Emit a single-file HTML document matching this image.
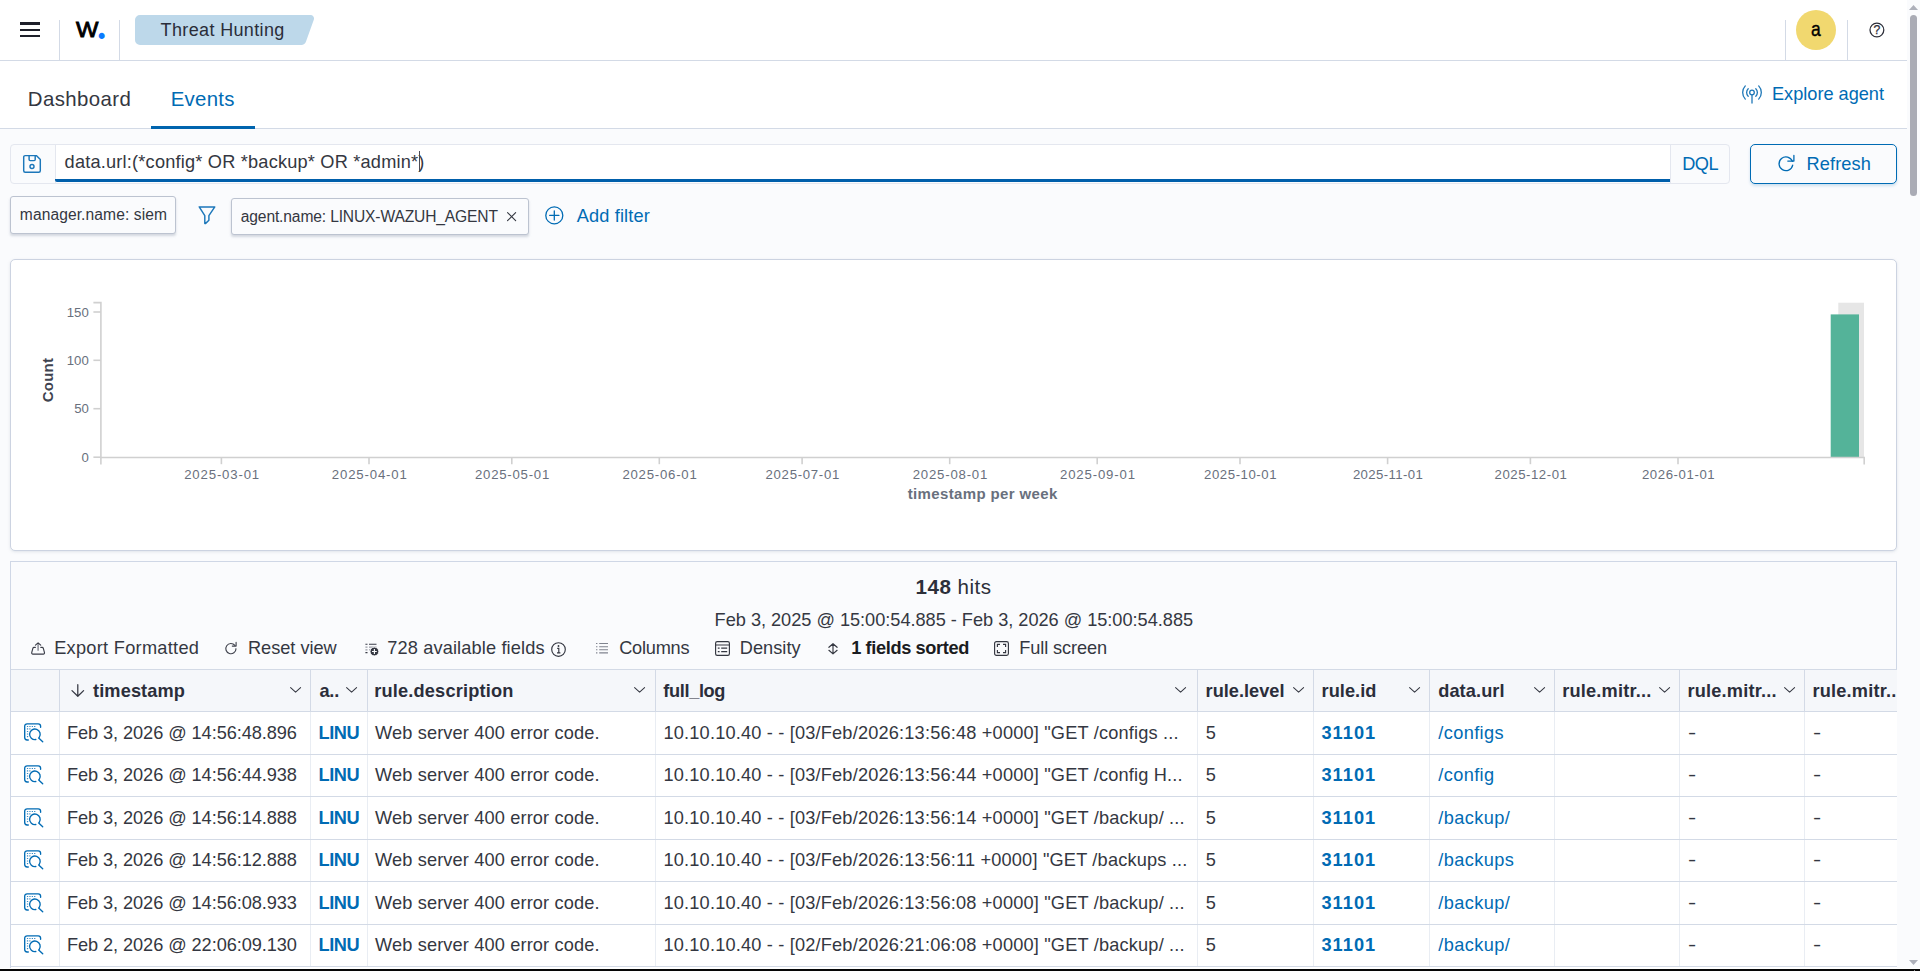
<!DOCTYPE html>
<html lang="en">
<head>
<meta charset="utf-8">
<title>Threat Hunting - Events</title>
<style>
*{box-sizing:border-box;margin:0;padding:0}
html,body{width:1920px;height:971px;overflow:hidden;background:#fafbfd}
body{font-family:"Liberation Sans",sans-serif;color:#343741;font-size:18.3px;position:relative}
.abs{position:absolute}
.t{position:absolute;white-space:nowrap;line-height:1;}
.blue{color:#006bb4}
.b{font-weight:700}
svg{position:absolute;overflow:visible}
/* header */
#hdr{position:absolute;left:0;top:0;width:1907px;height:61px;background:#fff;border-bottom:1px solid #d3dae6}
.vdiv{position:absolute;width:1px;background:#d3dae6}
#tabs{position:absolute;left:0;top:61px;width:1907px;height:68px;background:#fff;border-bottom:1px solid #d3dae6}
/* scrollbar */
#sb{position:absolute;left:1907px;top:0;width:13px;height:971px;background:#fafbfd}
#sbthumb{position:absolute;left:3px;top:15px;width:7px;height:181px;border-radius:4px;background:#a9abb5}
/* panels */
.panel{position:absolute;background:#fff;border:1px solid #ccd3e1;border-radius:5px;box-shadow:0 1px 3px rgba(152,162,179,.25)}
.badge{position:absolute;background:#fafbfd;border:1px solid #bcc3d0;border-radius:3px;box-shadow:0 2px 2.5px -.5px rgba(152,162,179,.4)}
/* table */
#grid{position:absolute;left:11px;top:669px;width:1886px;height:300px;overflow:hidden;background:#fff}
.hc{position:absolute;top:0;height:43px;background:#f5f7fa;border-right:1px solid #d3dae6;border-top:1px solid #d3dae6;border-bottom:1px solid #d3dae6}
.row{position:absolute;left:0;width:1886px;border-bottom:1px solid #d3dae6;background:#fff}
.c{position:absolute;top:0;height:100%;border-right:1px solid #e9edf3}
</style>
</head>
<body>
<!-- HEADER -->
<div id="hdr">
  <!-- hamburger -->
  <div class="abs" style="left:20px;top:22.4px;width:20px;height:2.2px;background:#1e202a"></div>
  <div class="abs" style="left:20px;top:28.8px;width:20px;height:2.2px;background:#1e202a"></div>
  <div class="abs" style="left:20px;top:35.2px;width:20px;height:2.2px;background:#1e202a"></div>
  <div class="vdiv" style="left:59px;top:20px;height:40px"></div>
  <div class="vdiv" style="left:119px;top:20px;height:40px"></div>
  <!-- logo -->
  <div class="t" style="left:75.7px;top:18.9px;font-size:22.2px;color:#000;-webkit-text-stroke:.9px #000;transform:scaleX(1.07);transform-origin:0 0">W</div>
  <div class="t b" style="left:97px;top:8px;font-family:'Liberation Serif',serif;font-size:37px;color:#0b7bff">.</div>
  <!-- app badge -->
  <svg style="left:135px;top:15px" width="180" height="30" viewBox="0 0 180 30"><path d="M5 0H175.5a3.5 3.5 0 0 1 3.3 4.7L171 26.6a5 5 0 0 1 -4.7 3.4H5a5 5 0 0 1 -5 -5V5a5 5 0 0 1 5 -5z" fill="#bdd8ea"/></svg>
  <div class="t" style="left:160.6px;top:20.9px;font-size:18px;letter-spacing:.36px;color:#2a2d39">Threat Hunting</div>
  <!-- right -->
  <div class="vdiv" style="left:1785px;top:20px;height:40px"></div>
  <div class="vdiv" style="left:1847px;top:20px;height:40px"></div>
  <div class="abs" style="left:1796px;top:10px;width:40px;height:40px;border-radius:50%;background:#f1d86f"></div>
  <div class="t" style="left:1809.7px;top:18.5px;font-size:20.8px;color:#000;-webkit-text-stroke:.4px #000;transform:scaleX(.84)">a</div>
  <svg style="left:1869px;top:22px" width="16" height="16" viewBox="0 0 16 16"><circle cx="7.9" cy="8" r="6.9" fill="none" stroke="#2b2d38" stroke-width="1.25"/></svg>
  <div class="t" style="left:1873.4px;top:24.2px;font-size:12.2px;color:#2b2d38;-webkit-text-stroke:.25px #2b2d38">?</div>
</div>
<div id="tabs">
  <div class="t" style="left:27.8px;top:27.6px;font-size:20.4px;letter-spacing:.4px;color:#343741">Dashboard</div>
  <div class="t blue" style="left:170.7px;top:27.6px;font-size:20.4px;letter-spacing:.3px">Events</div>
  <div class="abs" style="left:151px;top:65px;width:104px;height:3px;background:#0064ae"></div>
  <svg style="left:1741px;top:23px" width="22" height="20" viewBox="0 0 22 20" fill="none" stroke="#1f78b8" stroke-width="1.3" stroke-linecap="round"><circle cx="11" cy="8.5" r="2.3"/><path d="M11 10.9V19"/><path d="M7.2 4.7A5.4 5.4 0 0 0 7.2 12.3"/><path d="M14.8 4.7A5.4 5.4 0 0 1 14.8 12.3"/><path d="M4.3 1.9A9.6 9.6 0 0 0 4.3 15.1"/><path d="M17.7 1.9A9.6 9.6 0 0 1 17.7 15.1"/></svg>
  <div class="t blue" style="left:1772px;top:24.3px;font-size:18.2px;letter-spacing:-.02px">Explore agent</div>
</div>
<div id="sb"><div id="sbthumb"></div></div>
<!-- scrollbar arrows -->
<svg style="left:1909px;top:5px" width="9" height="5" viewBox="0 0 9 5"><path d="M0 5L4.5 0L9 5z" fill="#adb0ba"/></svg>
<svg style="left:1909px;top:960px" width="9" height="5" viewBox="0 0 9 5"><path d="M0 0L4.5 5L9 0z" fill="#adb0ba"/></svg>
<!-- SEARCH BAR -->
<div class="abs" style="left:10px;top:144px;width:1720px;height:40px;border:1px solid #e4e7ef;border-radius:4px;background:#fafbfd"></div>
<div class="abs" style="left:54.6px;top:145px;width:1px;height:38px;background:#e4e7ef"></div>
<div class="abs" style="left:55.6px;top:145px;width:1614.6px;height:35px;background:#fff"></div>
<div class="abs" style="left:55.2px;top:179px;width:1615px;height:2.5px;background:#005fab;border-radius:0 0 0 2px"></div>
<svg style="left:23px;top:155px" width="18" height="18" viewBox="0 0 18 18" fill="none" stroke="#1c77ba" stroke-width="1.45" stroke-linejoin="round"><path d="M2.2 .6H13.3L17.3 4.6V15.8a1.5 1.5 0 0 1 -1.5 1.5H2.2a1.5 1.5 0 0 1 -1.5 -1.5V2.1a1.5 1.5 0 0 1 1.5 -1.5z"/><path d="M6.1 .8V4.6a1 1 0 0 0 1 1H11.2a1 1 0 0 0 1 -1V.8"/><circle cx="9" cy="11.5" r="2"/></svg>
<div class="t" style="left:64.6px;top:153.4px;font-size:18.2px;letter-spacing:.195px;color:#343741">data.url:(*config* OR *backup* OR *admin*)</div>
<div class="abs" style="left:418.5px;top:150.5px;width:1.3px;height:21.3px;background:#4a4c55"></div>
<div class="t blue" style="left:1682.2px;top:155.3px;font-size:18.2px;letter-spacing:-.45px">DQL</div>
<div class="abs" style="left:1670px;top:145px;width:1px;height:38px;background:#e4e7ef"></div>
<!-- refresh -->
<div class="abs" style="left:1750px;top:144px;width:147px;height:40px;border:1px solid #006bb4;border-radius:5px;background:#fafbfd;box-shadow:0 2px 3px rgba(0,107,180,.18)"></div>
<svg style="left:1778.3px;top:154px" width="17" height="18" viewBox="0 0 17 18" fill="none" stroke="#006bb4" stroke-width="1.3" stroke-linecap="round"><path d="M14.4 7.3A6.9 6.9 0 1 0 14.7 11.1"/><path d="M15.9 1.5V7.1H9.8" stroke-linejoin="round"/></svg>
<div class="t blue" style="left:1806.4px;top:155.3px;font-size:18.2px;letter-spacing:.15px">Refresh</div>
<!-- FILTER ROW -->
<div class="badge" style="left:10px;top:196px;width:166px;height:38px"></div>
<div class="t" style="left:19.8px;top:207.3px;font-size:15.6px;letter-spacing:.09px;color:#343741">manager.name: siem</div>
<svg style="left:198px;top:206px" width="18" height="19" viewBox="0 0 18 19" fill="none" stroke="#1c77ba" stroke-width="1.45" stroke-linejoin="round"><path d="M1.2 .9H16.8L10.9 9.6V14.3L7.4 17.6H6.8V9.6z"/></svg>
<div class="badge" style="left:231px;top:198px;width:298px;height:37px"></div>
<div class="t" style="left:240.8px;top:209.1px;font-size:15.6px;letter-spacing:-.14px;color:#343741">agent.name: LINUX-WAZUH_AGENT</div>
<svg style="left:506.9px;top:211.9px" width="9.2" height="9.2" viewBox="0 0 10 10" stroke="#343741" stroke-width="1.2" stroke-linecap="round"><path d="M.6 .6L9.4 9.4M9.4 .6L.6 9.4"/></svg>
<svg style="left:545px;top:206px" width="19" height="19" viewBox="0 0 19 19" fill="none" stroke="#006bb4" stroke-width="1.3" stroke-linecap="round"><circle cx="9.3" cy="9.4" r="8.5"/><path d="M9.3 4.8V14M4.7 9.4H13.9"/></svg>
<div class="t blue" style="left:576.8px;top:206.8px;font-size:18.2px;letter-spacing:.13px">Add filter</div>
<div class="panel" style="left:10px;top:259px;width:1887px;height:292px"></div>
<svg style="left:0;top:259px" width="1907" height="292" viewBox="0 259 1907 292" font-family="Liberation Sans, sans-serif">
<rect x="1838.3" y="302.7" width="25.7" height="154.4" fill="#e6e6e6"/>
<rect x="1830.7" y="314.4" width="28.3" height="142.8" fill="#54b399"/>
<g stroke="#d0d0d0" stroke-width="1.6" fill="none">
<path d="M93.4 302.6H100.9V464.6"/>
<path d="M100.3 457.5H1864.2V464.6"/>
<path d="M93.4 312H100.9"/>
<path d="M93.4 360.3H100.9"/>
<path d="M93.4 408.7H100.9"/>
<path d="M93.4 457.2H100.9"/>
<path d="M221.4 457.2V464.2"/>
<path d="M369.0 457.2V464.2"/>
<path d="M511.8 457.2V464.2"/>
<path d="M659.3 457.2V464.2"/>
<path d="M802.1 457.2V464.2"/>
<path d="M949.7 457.2V464.2"/>
<path d="M1097.2 457.2V464.2"/>
<path d="M1240.0 457.2V464.2"/>
<path d="M1387.6 457.2V464.2"/>
<path d="M1530.4 457.2V464.2"/>
<path d="M1678.0 457.2V464.2"/>
</g>
<g fill="#69707d" font-size="13.2" text-anchor="end">
<text x="88.8" y="316.7">150</text>
<text x="88.8" y="365.0">100</text>
<text x="88.8" y="413.4">50</text>
<text x="88.8" y="461.9">0</text>
</g>
<g fill="#69707d" font-size="13.2" text-anchor="middle">
<text x="221.7" y="479.2" textLength="75" lengthAdjust="spacing">2025-03-01</text>
<text x="369.3" y="479.2" textLength="75" lengthAdjust="spacing">2025-04-01</text>
<text x="512.1" y="479.2" textLength="74.3" lengthAdjust="spacing">2025-05-01</text>
<text x="659.6" y="479.2" textLength="74.4" lengthAdjust="spacing">2025-06-01</text>
<text x="802.4" y="479.2" textLength="73.7" lengthAdjust="spacing">2025-07-01</text>
<text x="950.0" y="479.2" textLength="74.7" lengthAdjust="spacing">2025-08-01</text>
<text x="1097.5" y="479.2" textLength="75" lengthAdjust="spacing">2025-09-01</text>
<text x="1240.3" y="479.2" textLength="72.4" lengthAdjust="spacing">2025-10-01</text>
<text x="1387.9" y="479.2" textLength="70" lengthAdjust="spacing">2025-11-01</text>
<text x="1530.7" y="479.2" textLength="72.3" lengthAdjust="spacing">2025-12-01</text>
<text x="1678.3" y="479.2" textLength="72.7" lengthAdjust="spacing">2026-01-01</text>
</g>
<text x="982.5" y="498.9" font-size="15" font-weight="700" fill="#69707d" text-anchor="middle" textLength="149.6" lengthAdjust="spacing">timestamp per week</text>
<text transform="translate(52.6 380.2) rotate(-90)" font-size="15" font-weight="700" fill="#40434f" text-anchor="middle" textLength="44.3" lengthAdjust="spacing">Count</text>
</svg>
<!--TABLE-START-->
<div class="abs" style="left:10px;top:561px;width:1887px;height:420px;border:1px solid #cfd7e6;border-radius:0;background:#fafbfd"></div>
<div class="t" style="left:915.6px;top:576.5px;font-size:20.6px;color:#2c2f3a;letter-spacing:.48px"><span class="b">148</span> hits</div>
<div class="t" style="left:714.6px;top:610.6px;font-size:18.2px;color:#343741;letter-spacing:-.025px">Feb 3, 2025 @ 15:00:54.885 - Feb 3, 2026 @ 15:00:54.885</div>
<svg style="left:30.8px;top:641.5px" width="14.2" height="13.3" viewBox="0 0 15 14" fill="none" stroke="#3a3d48" stroke-width="1.2" stroke-linecap="round" stroke-linejoin="round"><path d="M4.6 5.7H3.3a1.4 1.4 0 0 0 -1.35 1.05L.75 11.3a1.2 1.2 0 0 0 1.15 1.5H13.1a1.2 1.2 0 0 0 1.15 -1.5L13.05 6.75a1.4 1.4 0 0 0 -1.35 -1.05H10.4"/><path d="M7.5 1.2V9.2" stroke="#858892" stroke-width="1.5" stroke-linecap="butt"/><path d="M4.7 3.3L7.5 .9L10.3 3.3"/></svg>
<div class="t" style="left:54.2px;top:639.1px;font-size:18.2px;letter-spacing:0.28px;color:#343741">Export Formatted</div>
<svg style="left:224.5px;top:642px" width="12.5" height="13" viewBox="0 0 12.5 13" fill="none" stroke="#40434e" stroke-width="1.15" stroke-linecap="round" stroke-linejoin="round"><path d="M9.9 3.45A5.1 5.1 0 1 0 11 6.7"/><path d="M11.1 .4V4.1H7.3"/></svg>
<div class="t" style="left:248px;top:639.1px;font-size:18.2px;letter-spacing:-0.03px;color:#343741">Reset view</div>
<svg style="left:364.5px;top:643px" width="14" height="13.5" viewBox="0 0 14 13.5"><g stroke-width="1.1" fill="none"><path d="M.4 1.3H2.5M4 1.3H11.5M.4 9.6H2.5" stroke="#3a3d48"/><path d="M.4 4.1H2.5M4 4.1H11.5M.4 6.9H2.5M4 6.9H6" stroke="#9a9da7"/></g><circle cx="9.4" cy="8.5" r="4.4" fill="#343741" stroke="#fafbfd" stroke-width=".9"/><path d="M9.4 6.1V10.9M7 8.5H11.8" stroke="#fafbfd" stroke-width="1.15"/></svg>
<div class="t" style="left:387.2px;top:639.1px;font-size:18.2px;letter-spacing:0.14px;color:#343741">728 available fields</div>
<svg style="left:551.4px;top:642.4px" width="15" height="15" viewBox="0 0 15 15"><circle cx="7.5" cy="7.5" r="6.8" fill="none" stroke="#343741" stroke-width="1.15"/><path d="M6.2 6.4H7.8V10.6M6 10.8H9.4" stroke="#343741" stroke-width="1.15" fill="none"/><circle cx="7.5" cy="4" r=".95" fill="#343741"/></svg>
<svg style="left:595.5px;top:643.4px" width="12" height="10.4" viewBox="0 0 12 10.4" stroke="#80848f" stroke-width="1.05" fill="none"><path d="M0 .6H1.4M3.2 .6H12M0 3.7H1.4M3.2 3.7H12M0 6.8H1.4M3.2 6.8H12M0 9.9H1.4M3.2 9.9H12"/></svg>
<div class="t" style="left:619.2px;top:639.1px;font-size:18.2px;letter-spacing:-0.23px;color:#343741">Columns</div>
<svg style="left:715px;top:641px" width="15" height="15" viewBox="0 0 15 15" fill="none" stroke="#343741" stroke-width="1.15"><rect x=".6" y=".6" width="13.8" height="13.8" rx="1.6"/><path d="M.6 4H14.4M2.8 7.1H4.6M6.2 7.1H12.2M2.8 10.6H4.6M6.2 10.6H12.2"/></svg>
<div class="t" style="left:739.8px;top:639.1px;font-size:18.2px;letter-spacing:0.02px;color:#343741">Density</div>
<svg style="left:828px;top:642.6px" width="10" height="11.6" viewBox="0 0 10 11.6" fill="none" stroke="#343741" stroke-width="1.15" stroke-linecap="round" stroke-linejoin="round"><path d="M5 1V10.6M.9 4.3L5 .7L9.1 4.3M.9 7.3L5 10.9L9.1 7.3"/></svg>
<div class="t b" style="left:851.2px;top:639.1px;font-size:18.2px;letter-spacing:-0.37px;color:#1a1c21">1 fields sorted</div>
<svg style="left:994px;top:641px" width="15" height="15" viewBox="0 0 15 15" fill="none" stroke="#343741" stroke-width="1.15"><rect x=".6" y=".6" width="13.8" height="13.8" rx="1.8"/><path d="M3.4 6V3.4H6M9 3.4H11.6V6M11.6 9V11.6H9M6 11.6H3.4V9"/></svg>
<div class="t" style="left:1019.3px;top:639.1px;font-size:18.2px;letter-spacing:-0.11px;color:#343741">Full screen</div>
<div id="grid">
<div class="hc" style="left:0px;width:49px"></div>
<div class="hc" style="left:49px;width:251px"></div>
<div class="hc" style="left:300px;width:57px"></div>
<div class="hc" style="left:357px;width:288px"></div>
<div class="hc" style="left:645px;width:542px"></div>
<div class="hc" style="left:1187px;width:116px"></div>
<div class="hc" style="left:1303px;width:116px"></div>
<div class="hc" style="left:1419px;width:125px"></div>
<div class="hc" style="left:1544px;width:125px"></div>
<div class="hc" style="left:1669px;width:125px"></div>
<div class="hc" style="left:1794px;width:126px"></div>
<svg style="left:60.1px;top:14.5px" width="13.6" height="13" viewBox="0 0 13.6 13" fill="none" stroke="#343741" stroke-width="1.25" stroke-linecap="round" stroke-linejoin="round"><path d="M6.8 .7V12M1 6.6L6.8 12.3L12.6 6.6"/></svg>
<div class="t b" style="left:82.0px;top:12.6px;font-size:18.2px;letter-spacing:0.12px;color:#2b2e3a">timestamp</div>
<div class="t b" style="left:308.4px;top:12.6px;font-size:18.2px;letter-spacing:-0.2px;color:#2b2e3a">a..</div>
<div class="t b" style="left:363.2px;top:12.6px;font-size:18.2px;letter-spacing:0.18px;color:#2b2e3a">rule.description</div>
<div class="t b" style="left:652.3px;top:12.6px;font-size:18.2px;letter-spacing:-0.36px;color:#2b2e3a">full_log</div>
<div class="t b" style="left:1194.6px;top:12.6px;font-size:18.2px;letter-spacing:0px;color:#2b2e3a">rule.level</div>
<div class="t b" style="left:1310.6px;top:12.6px;font-size:18.2px;letter-spacing:0.03px;color:#2b2e3a">rule.id</div>
<div class="t b" style="left:1427.2px;top:12.6px;font-size:18.2px;letter-spacing:0.1px;color:#2b2e3a">data.url</div>
<div class="t b" style="left:1551.2px;top:12.6px;font-size:18.2px;letter-spacing:0.2px;color:#2b2e3a">rule.mitr...</div>
<div class="t b" style="left:1676.4px;top:12.6px;font-size:18.2px;letter-spacing:0.2px;color:#2b2e3a">rule.mitr...</div>
<div class="t b" style="left:1801.4px;top:12.6px;font-size:18.2px;letter-spacing:0.2px;color:#2b2e3a">rule.mitr...</div>
<svg style="left:279.0px;top:18.3px" width="11.2" height="6" viewBox="0 0 11.2 6" fill="none" stroke="#343741" stroke-width="1.05" stroke-linecap="round" stroke-linejoin="round"><path d="M.6 .6L5.6 5.2L10.6 .6"/></svg>
<svg style="left:335.2px;top:18.3px" width="11.2" height="6" viewBox="0 0 11.2 6" fill="none" stroke="#343741" stroke-width="1.05" stroke-linecap="round" stroke-linejoin="round"><path d="M.6 .6L5.6 5.2L10.6 .6"/></svg>
<svg style="left:622.5px;top:18.3px" width="11.2" height="6" viewBox="0 0 11.2 6" fill="none" stroke="#343741" stroke-width="1.05" stroke-linecap="round" stroke-linejoin="round"><path d="M.6 .6L5.6 5.2L10.6 .6"/></svg>
<svg style="left:1164.3px;top:18.3px" width="11.2" height="6" viewBox="0 0 11.2 6" fill="none" stroke="#343741" stroke-width="1.05" stroke-linecap="round" stroke-linejoin="round"><path d="M.6 .6L5.6 5.2L10.6 .6"/></svg>
<svg style="left:1282.0px;top:18.3px" width="11.2" height="6" viewBox="0 0 11.2 6" fill="none" stroke="#343741" stroke-width="1.05" stroke-linecap="round" stroke-linejoin="round"><path d="M.6 .6L5.6 5.2L10.6 .6"/></svg>
<svg style="left:1397.7px;top:18.3px" width="11.2" height="6" viewBox="0 0 11.2 6" fill="none" stroke="#343741" stroke-width="1.05" stroke-linecap="round" stroke-linejoin="round"><path d="M.6 .6L5.6 5.2L10.6 .6"/></svg>
<svg style="left:1522.8px;top:18.3px" width="11.2" height="6" viewBox="0 0 11.2 6" fill="none" stroke="#343741" stroke-width="1.05" stroke-linecap="round" stroke-linejoin="round"><path d="M.6 .6L5.6 5.2L10.6 .6"/></svg>
<svg style="left:1648.0px;top:18.3px" width="11.2" height="6" viewBox="0 0 11.2 6" fill="none" stroke="#343741" stroke-width="1.05" stroke-linecap="round" stroke-linejoin="round"><path d="M.6 .6L5.6 5.2L10.6 .6"/></svg>
<svg style="left:1773.0px;top:18.3px" width="11.2" height="6" viewBox="0 0 11.2 6" fill="none" stroke="#343741" stroke-width="1.05" stroke-linecap="round" stroke-linejoin="round"><path d="M.6 .6L5.6 5.2L10.6 .6"/></svg>
<div class="row" style="top:43px;height:43px">
<div class="c" style="left:0px;width:49px"></div>
<div class="c" style="left:49px;width:251px"></div>
<div class="c" style="left:300px;width:57px"></div>
<div class="c" style="left:357px;width:288px"></div>
<div class="c" style="left:645px;width:542px"></div>
<div class="c" style="left:1187px;width:116px"></div>
<div class="c" style="left:1303px;width:116px"></div>
<div class="c" style="left:1419px;width:125px"></div>
<div class="c" style="left:1544px;width:125px"></div>
<div class="c" style="left:1669px;width:125px"></div>
<div class="c" style="left:1794px;width:126px"></div>
<svg style="left:13px;top:10.9px" width="20" height="20" viewBox="0 0 20 20" fill="none" stroke="#006bb4" stroke-width="1.35" stroke-linecap="round"><path d="M4.3 17H3.1A2.4 2.4 0 0 1 .7 14.6V3.2A2.4 2.4 0 0 1 3.1 .8H14.2A2.4 2.4 0 0 1 16.6 3.2V4.3"/><path d="M3.4 3.5H12M3.4 5.9H6M3.4 8.5H4.2M3.4 11H4.2M3.4 13.6H4.2" stroke-dasharray=".3 2.1" stroke-width="1.15" opacity=".85"/><path d="M15.24 14.34A5.3 5.3 0 1 0 11.82 16.52"/><path d="M14.7 15L18.7 18.8"/></svg>
<div class="t" style="left:55.9px;top:11.5px;font-size:18.2px;letter-spacing:-0.07px;color:#343741">Feb 3, 2026 @ 14:56:48.896</div>
<div class="t b" style="left:307.6px;top:11.5px;font-size:18.2px;letter-spacing:-0.45px;color:#006bb4">LINU</div>
<div class="t" style="left:364.0px;top:11.5px;font-size:18.2px;letter-spacing:0.14px;color:#343741">Web server 400 error code.</div>
<div class="t" style="left:652.5px;top:11.5px;font-size:18.2px;letter-spacing:0.18px;color:#343741">10.10.10.40 - - [03/Feb/2026:13:56:48 +0000] &quot;GET /configs ...</div>
<div class="t" style="left:1194.8px;top:11.5px;font-size:18.2px;letter-spacing:0px;color:#343741">5</div>
<div class="t b" style="left:1310.4px;top:11.5px;font-size:18.2px;letter-spacing:1.05px;color:#006bb4">31101</div>
<div class="t" style="left:1427.2px;top:11.5px;font-size:18.2px;letter-spacing:0.4px;color:#006bb4">/configs</div>
<div class="t" style="left:1677.4px;top:11.5px;font-size:18.2px;letter-spacing:0px;color:#343741;transform:scaleX(1.35);transform-origin:0 0">-</div>
<div class="t" style="left:1802.4px;top:11.5px;font-size:18.2px;letter-spacing:0px;color:#343741;transform:scaleX(1.35);transform-origin:0 0">-</div>
</div>
<div class="row" style="top:86px;height:42px">
<div class="c" style="left:0px;width:49px"></div>
<div class="c" style="left:49px;width:251px"></div>
<div class="c" style="left:300px;width:57px"></div>
<div class="c" style="left:357px;width:288px"></div>
<div class="c" style="left:645px;width:542px"></div>
<div class="c" style="left:1187px;width:116px"></div>
<div class="c" style="left:1303px;width:116px"></div>
<div class="c" style="left:1419px;width:125px"></div>
<div class="c" style="left:1544px;width:125px"></div>
<div class="c" style="left:1669px;width:125px"></div>
<div class="c" style="left:1794px;width:126px"></div>
<svg style="left:13px;top:10.4px" width="20" height="20" viewBox="0 0 20 20" fill="none" stroke="#006bb4" stroke-width="1.35" stroke-linecap="round"><path d="M4.3 17H3.1A2.4 2.4 0 0 1 .7 14.6V3.2A2.4 2.4 0 0 1 3.1 .8H14.2A2.4 2.4 0 0 1 16.6 3.2V4.3"/><path d="M3.4 3.5H12M3.4 5.9H6M3.4 8.5H4.2M3.4 11H4.2M3.4 13.6H4.2" stroke-dasharray=".3 2.1" stroke-width="1.15" opacity=".85"/><path d="M15.24 14.34A5.3 5.3 0 1 0 11.82 16.52"/><path d="M14.7 15L18.7 18.8"/></svg>
<div class="t" style="left:55.9px;top:11.0px;font-size:18.2px;letter-spacing:-0.07px;color:#343741">Feb 3, 2026 @ 14:56:44.938</div>
<div class="t b" style="left:307.6px;top:11.0px;font-size:18.2px;letter-spacing:-0.45px;color:#006bb4">LINU</div>
<div class="t" style="left:364.0px;top:11.0px;font-size:18.2px;letter-spacing:0.14px;color:#343741">Web server 400 error code.</div>
<div class="t" style="left:652.5px;top:11.0px;font-size:18.2px;letter-spacing:0.18px;color:#343741">10.10.10.40 - - [03/Feb/2026:13:56:44 +0000] &quot;GET /config H...</div>
<div class="t" style="left:1194.8px;top:11.0px;font-size:18.2px;letter-spacing:0px;color:#343741">5</div>
<div class="t b" style="left:1310.4px;top:11.0px;font-size:18.2px;letter-spacing:1.05px;color:#006bb4">31101</div>
<div class="t" style="left:1427.2px;top:11.0px;font-size:18.2px;letter-spacing:0.4px;color:#006bb4">/config</div>
<div class="t" style="left:1677.4px;top:11.0px;font-size:18.2px;letter-spacing:0px;color:#343741;transform:scaleX(1.35);transform-origin:0 0">-</div>
<div class="t" style="left:1802.4px;top:11.0px;font-size:18.2px;letter-spacing:0px;color:#343741;transform:scaleX(1.35);transform-origin:0 0">-</div>
</div>
<div class="row" style="top:128px;height:43px">
<div class="c" style="left:0px;width:49px"></div>
<div class="c" style="left:49px;width:251px"></div>
<div class="c" style="left:300px;width:57px"></div>
<div class="c" style="left:357px;width:288px"></div>
<div class="c" style="left:645px;width:542px"></div>
<div class="c" style="left:1187px;width:116px"></div>
<div class="c" style="left:1303px;width:116px"></div>
<div class="c" style="left:1419px;width:125px"></div>
<div class="c" style="left:1544px;width:125px"></div>
<div class="c" style="left:1669px;width:125px"></div>
<div class="c" style="left:1794px;width:126px"></div>
<svg style="left:13px;top:10.9px" width="20" height="20" viewBox="0 0 20 20" fill="none" stroke="#006bb4" stroke-width="1.35" stroke-linecap="round"><path d="M4.3 17H3.1A2.4 2.4 0 0 1 .7 14.6V3.2A2.4 2.4 0 0 1 3.1 .8H14.2A2.4 2.4 0 0 1 16.6 3.2V4.3"/><path d="M3.4 3.5H12M3.4 5.9H6M3.4 8.5H4.2M3.4 11H4.2M3.4 13.6H4.2" stroke-dasharray=".3 2.1" stroke-width="1.15" opacity=".85"/><path d="M15.24 14.34A5.3 5.3 0 1 0 11.82 16.52"/><path d="M14.7 15L18.7 18.8"/></svg>
<div class="t" style="left:55.9px;top:11.5px;font-size:18.2px;letter-spacing:-0.07px;color:#343741">Feb 3, 2026 @ 14:56:14.888</div>
<div class="t b" style="left:307.6px;top:11.5px;font-size:18.2px;letter-spacing:-0.45px;color:#006bb4">LINU</div>
<div class="t" style="left:364.0px;top:11.5px;font-size:18.2px;letter-spacing:0.14px;color:#343741">Web server 400 error code.</div>
<div class="t" style="left:652.5px;top:11.5px;font-size:18.2px;letter-spacing:0.18px;color:#343741">10.10.10.40 - - [03/Feb/2026:13:56:14 +0000] &quot;GET /backup/ ...</div>
<div class="t" style="left:1194.8px;top:11.5px;font-size:18.2px;letter-spacing:0px;color:#343741">5</div>
<div class="t b" style="left:1310.4px;top:11.5px;font-size:18.2px;letter-spacing:1.05px;color:#006bb4">31101</div>
<div class="t" style="left:1427.2px;top:11.5px;font-size:18.2px;letter-spacing:0.4px;color:#006bb4">/backup/</div>
<div class="t" style="left:1677.4px;top:11.5px;font-size:18.2px;letter-spacing:0px;color:#343741;transform:scaleX(1.35);transform-origin:0 0">-</div>
<div class="t" style="left:1802.4px;top:11.5px;font-size:18.2px;letter-spacing:0px;color:#343741;transform:scaleX(1.35);transform-origin:0 0">-</div>
</div>
<div class="row" style="top:171px;height:42px">
<div class="c" style="left:0px;width:49px"></div>
<div class="c" style="left:49px;width:251px"></div>
<div class="c" style="left:300px;width:57px"></div>
<div class="c" style="left:357px;width:288px"></div>
<div class="c" style="left:645px;width:542px"></div>
<div class="c" style="left:1187px;width:116px"></div>
<div class="c" style="left:1303px;width:116px"></div>
<div class="c" style="left:1419px;width:125px"></div>
<div class="c" style="left:1544px;width:125px"></div>
<div class="c" style="left:1669px;width:125px"></div>
<div class="c" style="left:1794px;width:126px"></div>
<svg style="left:13px;top:10.4px" width="20" height="20" viewBox="0 0 20 20" fill="none" stroke="#006bb4" stroke-width="1.35" stroke-linecap="round"><path d="M4.3 17H3.1A2.4 2.4 0 0 1 .7 14.6V3.2A2.4 2.4 0 0 1 3.1 .8H14.2A2.4 2.4 0 0 1 16.6 3.2V4.3"/><path d="M3.4 3.5H12M3.4 5.9H6M3.4 8.5H4.2M3.4 11H4.2M3.4 13.6H4.2" stroke-dasharray=".3 2.1" stroke-width="1.15" opacity=".85"/><path d="M15.24 14.34A5.3 5.3 0 1 0 11.82 16.52"/><path d="M14.7 15L18.7 18.8"/></svg>
<div class="t" style="left:55.9px;top:11.0px;font-size:18.2px;letter-spacing:-0.07px;color:#343741">Feb 3, 2026 @ 14:56:12.888</div>
<div class="t b" style="left:307.6px;top:11.0px;font-size:18.2px;letter-spacing:-0.45px;color:#006bb4">LINU</div>
<div class="t" style="left:364.0px;top:11.0px;font-size:18.2px;letter-spacing:0.14px;color:#343741">Web server 400 error code.</div>
<div class="t" style="left:652.5px;top:11.0px;font-size:18.2px;letter-spacing:0.18px;color:#343741">10.10.10.40 - - [03/Feb/2026:13:56:11 +0000] &quot;GET /backups ...</div>
<div class="t" style="left:1194.8px;top:11.0px;font-size:18.2px;letter-spacing:0px;color:#343741">5</div>
<div class="t b" style="left:1310.4px;top:11.0px;font-size:18.2px;letter-spacing:1.05px;color:#006bb4">31101</div>
<div class="t" style="left:1427.2px;top:11.0px;font-size:18.2px;letter-spacing:0.4px;color:#006bb4">/backups</div>
<div class="t" style="left:1677.4px;top:11.0px;font-size:18.2px;letter-spacing:0px;color:#343741;transform:scaleX(1.35);transform-origin:0 0">-</div>
<div class="t" style="left:1802.4px;top:11.0px;font-size:18.2px;letter-spacing:0px;color:#343741;transform:scaleX(1.35);transform-origin:0 0">-</div>
</div>
<div class="row" style="top:213px;height:43px">
<div class="c" style="left:0px;width:49px"></div>
<div class="c" style="left:49px;width:251px"></div>
<div class="c" style="left:300px;width:57px"></div>
<div class="c" style="left:357px;width:288px"></div>
<div class="c" style="left:645px;width:542px"></div>
<div class="c" style="left:1187px;width:116px"></div>
<div class="c" style="left:1303px;width:116px"></div>
<div class="c" style="left:1419px;width:125px"></div>
<div class="c" style="left:1544px;width:125px"></div>
<div class="c" style="left:1669px;width:125px"></div>
<div class="c" style="left:1794px;width:126px"></div>
<svg style="left:13px;top:10.9px" width="20" height="20" viewBox="0 0 20 20" fill="none" stroke="#006bb4" stroke-width="1.35" stroke-linecap="round"><path d="M4.3 17H3.1A2.4 2.4 0 0 1 .7 14.6V3.2A2.4 2.4 0 0 1 3.1 .8H14.2A2.4 2.4 0 0 1 16.6 3.2V4.3"/><path d="M3.4 3.5H12M3.4 5.9H6M3.4 8.5H4.2M3.4 11H4.2M3.4 13.6H4.2" stroke-dasharray=".3 2.1" stroke-width="1.15" opacity=".85"/><path d="M15.24 14.34A5.3 5.3 0 1 0 11.82 16.52"/><path d="M14.7 15L18.7 18.8"/></svg>
<div class="t" style="left:55.9px;top:11.5px;font-size:18.2px;letter-spacing:-0.07px;color:#343741">Feb 3, 2026 @ 14:56:08.933</div>
<div class="t b" style="left:307.6px;top:11.5px;font-size:18.2px;letter-spacing:-0.45px;color:#006bb4">LINU</div>
<div class="t" style="left:364.0px;top:11.5px;font-size:18.2px;letter-spacing:0.14px;color:#343741">Web server 400 error code.</div>
<div class="t" style="left:652.5px;top:11.5px;font-size:18.2px;letter-spacing:0.18px;color:#343741">10.10.10.40 - - [03/Feb/2026:13:56:08 +0000] &quot;GET /backup/ ...</div>
<div class="t" style="left:1194.8px;top:11.5px;font-size:18.2px;letter-spacing:0px;color:#343741">5</div>
<div class="t b" style="left:1310.4px;top:11.5px;font-size:18.2px;letter-spacing:1.05px;color:#006bb4">31101</div>
<div class="t" style="left:1427.2px;top:11.5px;font-size:18.2px;letter-spacing:0.4px;color:#006bb4">/backup/</div>
<div class="t" style="left:1677.4px;top:11.5px;font-size:18.2px;letter-spacing:0px;color:#343741;transform:scaleX(1.35);transform-origin:0 0">-</div>
<div class="t" style="left:1802.4px;top:11.5px;font-size:18.2px;letter-spacing:0px;color:#343741;transform:scaleX(1.35);transform-origin:0 0">-</div>
</div>
<div class="row" style="top:256px;height:42px">
<div class="c" style="left:0px;width:49px"></div>
<div class="c" style="left:49px;width:251px"></div>
<div class="c" style="left:300px;width:57px"></div>
<div class="c" style="left:357px;width:288px"></div>
<div class="c" style="left:645px;width:542px"></div>
<div class="c" style="left:1187px;width:116px"></div>
<div class="c" style="left:1303px;width:116px"></div>
<div class="c" style="left:1419px;width:125px"></div>
<div class="c" style="left:1544px;width:125px"></div>
<div class="c" style="left:1669px;width:125px"></div>
<div class="c" style="left:1794px;width:126px"></div>
<svg style="left:13px;top:10.4px" width="20" height="20" viewBox="0 0 20 20" fill="none" stroke="#006bb4" stroke-width="1.35" stroke-linecap="round"><path d="M4.3 17H3.1A2.4 2.4 0 0 1 .7 14.6V3.2A2.4 2.4 0 0 1 3.1 .8H14.2A2.4 2.4 0 0 1 16.6 3.2V4.3"/><path d="M3.4 3.5H12M3.4 5.9H6M3.4 8.5H4.2M3.4 11H4.2M3.4 13.6H4.2" stroke-dasharray=".3 2.1" stroke-width="1.15" opacity=".85"/><path d="M15.24 14.34A5.3 5.3 0 1 0 11.82 16.52"/><path d="M14.7 15L18.7 18.8"/></svg>
<div class="t" style="left:55.9px;top:11.0px;font-size:18.2px;letter-spacing:-0.07px;color:#343741">Feb 2, 2026 @ 22:06:09.130</div>
<div class="t b" style="left:307.6px;top:11.0px;font-size:18.2px;letter-spacing:-0.45px;color:#006bb4">LINU</div>
<div class="t" style="left:364.0px;top:11.0px;font-size:18.2px;letter-spacing:0.14px;color:#343741">Web server 400 error code.</div>
<div class="t" style="left:652.5px;top:11.0px;font-size:18.2px;letter-spacing:0.18px;color:#343741">10.10.10.40 - - [02/Feb/2026:21:06:08 +0000] &quot;GET /backup/ ...</div>
<div class="t" style="left:1194.8px;top:11.0px;font-size:18.2px;letter-spacing:0px;color:#343741">5</div>
<div class="t b" style="left:1310.4px;top:11.0px;font-size:18.2px;letter-spacing:1.05px;color:#006bb4">31101</div>
<div class="t" style="left:1427.2px;top:11.0px;font-size:18.2px;letter-spacing:0.4px;color:#006bb4">/backup/</div>
<div class="t" style="left:1677.4px;top:11.0px;font-size:18.2px;letter-spacing:0px;color:#343741;transform:scaleX(1.35);transform-origin:0 0">-</div>
<div class="t" style="left:1802.4px;top:11.0px;font-size:18.2px;letter-spacing:0px;color:#343741;transform:scaleX(1.35);transform-origin:0 0">-</div>
</div>
</div>
<!--TABLE-END-->
<!-- bottom black strip -->
<div class="abs" style="left:0;top:967.7px;width:1920px;height:1.3px;background:#fff"></div>
<div class="abs" style="left:0;top:969px;width:1920px;height:2px;background:#060606"></div>
<div class="abs" style="left:1914px;top:969.5px;width:1px;height:1.5px;background:#8a8a8a"></div>
</body>
</html>
